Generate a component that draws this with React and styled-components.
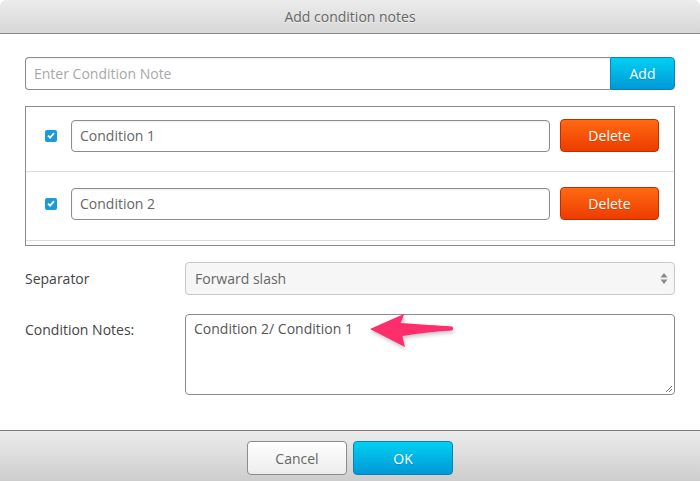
import React from "react";
import styled, { createGlobalStyle } from "styled-components";

const GlobalStyle = createGlobalStyle`
  html, body {
    margin: 0;
    padding: 0;
    background: #fff;
  }
  body {
    font-family: "Open Sans", "Liberation Sans", sans-serif;
    font-size: 14px;
    color: #444;
  }
`;

const Dialog = styled.div`
  width: 700px;
  height: 481px;
  display: flex;
  flex-direction: column;
  background: #fff;
  position: relative;
  overflow: hidden;
`;

const Header = styled.div`
  height: 33px;
  flex: none;
  display: flex;
  align-items: center;
  justify-content: center;
  border-radius: 6px 6px 0 0;
  background: linear-gradient(#ececec, #d7d7d7);
  border-bottom: 1px solid #8a8a8a;
  color: #666;
  font-size: 14px;
  text-shadow: 0 1px 0 rgba(255, 255, 255, 0.6);
`;

const Body = styled.div`
  flex: 1;
  padding: 23px 25px 0;
  display: flex;
  flex-direction: column;
`;

const AddRow = styled.div`
  display: flex;
  height: 33px;
`;

const NoteInput = styled.div`
  flex: 1;
  display: flex;
  align-items: center;
  padding: 0 8px;
  border: 1px solid #8c8c8c;
  border-right: none;
  border-radius: 4px 0 0 4px;
  color: ${(p) => (p.placeholder ? "#a8a8a8" : "#666")};
  box-shadow: inset 0 1px 2px rgba(0, 0, 0, 0.06);
`;

const Button = styled.div`
  display: flex;
  align-items: center;
  justify-content: center;
  box-sizing: border-box;
  width: ${(p) => p.width}px;
  height: ${(p) => p.height || 33}px;
  border-radius: ${(p) => p.radius || "4px"};
  font-size: 14px;
  color: #fff;
  text-shadow: 0 1px 0 rgba(0, 0, 0, 0.15);
  ${(p) =>
    p.variant === "blue" &&
    `
    background: linear-gradient(#00d0f2, #0098d6);
    border: 1px solid #0a84b8;
  `}
  ${(p) =>
    p.variant === "orange" &&
    `
    background: linear-gradient(#ff6a12, #ee3c00);
    border: 1px solid #c02e00;
  `}
  ${(p) =>
    p.variant === "plain" &&
    `
    background: linear-gradient(#ffffff, #ececec);
    border: 1px solid #8c8c8c;
    color: #666;
    text-shadow: none;
  `}
`;

const List = styled.div`
  margin-top: 16px;
  border: 1px solid #8c8c8c;
  padding-bottom: 4px;
`;

const ListRow = styled.div`
  display: flex;
  align-items: center;
  padding: ${(p) => (p.first ? "12px 15px 19px 19px" : "15px 15px 20px 19px")};
  border-bottom: 1px solid #dcdcdc;
`;

const Check = styled.div`
  width: 12px;
  height: 12px;
  border-radius: 2px;
  background: #1a9bd7;
  display: flex;
  align-items: center;
  justify-content: center;
  margin-right: 14px;
  flex: none;
`;

const Field = styled.div`
  flex: 1;
  height: 32px;
  box-sizing: border-box;
  display: flex;
  align-items: center;
  padding: 0 8px;
  border: 1px solid #8c8c8c;
  border-radius: 4px;
  color: #666;
  box-shadow: inset 0 1px 2px rgba(0, 0, 0, 0.08);
  margin-right: 10px;
`;

const FormRow = styled.div`
  display: flex;
  align-items: ${(p) => (p.top ? "flex-start" : "center")};
  margin-top: ${(p) => p.mt}px;
`;

const Label = styled.div`
  width: 160px;
  flex: none;
  color: #444;
  padding-top: ${(p) => (p.top ? 6 : 0)}px;
`;

const Select = styled.div`
  flex: 1;
  height: 33px;
  box-sizing: border-box;
  display: flex;
  align-items: center;
  justify-content: space-between;
  padding: 0 6px 0 9px;
  background: #f6f6f6;
  border: 1px solid #c8c8c8;
  border-radius: 4px;
  color: #666;
`;

const TextArea = styled.div`
  flex: 1;
  height: 81px;
  box-sizing: border-box;
  padding: 4px 8px;
  border: 1px solid #8c8c8c;
  border-radius: 4px;
  color: #555;
  position: relative;
`;

const Grip = styled.svg`
  position: absolute;
  right: 1px;
  bottom: 1px;
`;

const Arrow = styled.svg`
  position: absolute;
  left: 364px;
  top: 308px;
  filter: drop-shadow(1px 2px 2px rgba(0, 0, 0, 0.25));
`;

const Footer = styled.div`
  height: 51px;
  flex: none;
  border-top: 1px solid #7c7c7c;
  background: linear-gradient(#ececec, #cdcdcd);
  display: flex;
  justify-content: center;
  align-items: flex-start;
  padding-top: 10px;
  box-sizing: border-box;
  gap: 6px;
`;

const CheckMark = () => (
  <svg width="8" height="7" viewBox="0 0 8 7">
    <path d="M1 3.6 L3.1 5.6 L7 1.2" fill="none" stroke="#fff" strokeWidth="1.8" />
  </svg>
);

const conditions = ["Condition 1", "Condition 2"];

export default function App() {
  return (
    <Dialog>
      <GlobalStyle />
      <Header>Add condition notes</Header>
      <Body>
        <AddRow>
          <NoteInput placeholder="true">Enter Condition Note</NoteInput>
          <Button variant="blue" width={65} radius="0 4px 4px 0">
            Add
          </Button>
        </AddRow>
        <List>
          {conditions.map((c, i) => (
            <ListRow key={c} first={i === 0}>
              <Check>
                <CheckMark />
              </Check>
              <Field>{c}</Field>
              <Button variant="orange" width={99} height={33}>
                Delete
              </Button>
            </ListRow>
          ))}
        </List>
        <FormRow mt={16}>
          <Label>Separator</Label>
          <Select>
            Forward slash
            <svg width="8" height="13" viewBox="0 0 8 13">
              <path d="M4 1 L7.5 5.5 H0.5 Z" fill="#8a8a8a" />
              <path d="M4 12 L7.5 7.5 H0.5 Z" fill="#8a8a8a" />
            </svg>
          </Select>
        </FormRow>
        <FormRow mt={19} top>
          <Label top>Condition Notes:</Label>
          <TextArea>
            Condition 2/ Condition 1
            <Grip width="9" height="9" viewBox="0 0 9 9">
              <path d="M8 2 L2 8 M8 5 L5 8" stroke="#777" strokeWidth="1" />
            </Grip>
          </TextArea>
        </FormRow>
      </Body>
      <Footer>
        <Button variant="plain" width={100} height={34}>
          Cancel
        </Button>
        <Button variant="blue" width={100} height={34}>
          OK
        </Button>
      </Footer>
      <Arrow width="96" height="46" viewBox="0 0 96 46">
        <path
          d="M6 21 L40 6 C39 10 37.5 13 36.5 15 C56 16.5 74 17.5 88 18.5 C89.5 19.5 89.5 21.5 88 22.5 C73 23.5 56 25 38.5 28 C39 31 40 35 41 39 Z"
          fill="#fe2d6c"
        />
      </Arrow>
    </Dialog>
  );
}
